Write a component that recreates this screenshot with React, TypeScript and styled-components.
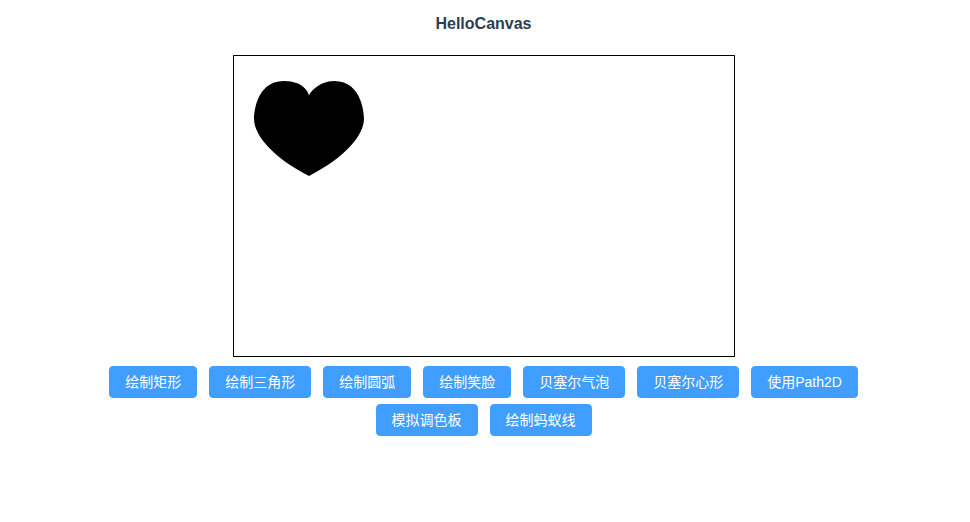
import React, { useEffect, useRef } from "react";
import styled, { createGlobalStyle } from "styled-components";

const Global = createGlobalStyle`
  html, body { margin: 0; padding: 0; background: #fff; }
  body { font-family: "Liberation Sans", Arial, "Noto Sans CJK SC", sans-serif; }
`;

const Page = styled.div`
  display: flex;
  flex-direction: column;
  align-items: center;
  padding-right: 3px;
`;

const Title = styled.h3`
  margin: 15px 0 0;
  font-size: 16px;
  line-height: 18px;
  font-weight: bold;
  color: #2c3e50;
`;

const Board = styled.canvas`
  display: block;
  margin-top: 22px;
  border: 1px solid #000;
`;

const Toolbar = styled.div`
  display: flex;
  flex-wrap: wrap;
  justify-content: center;
  column-gap: 12px;
  row-gap: 6px;
  max-width: 800px;
  margin-top: 9px;
`;

const Button = styled.button`
  height: 32px;
  padding: 0 15px;
  border: 1px solid #409eff;
  border-radius: 4px;
  background: #409eff;
  color: #fff;
  font-family: "Liberation Sans", Arial, "Noto Sans CJK SC", sans-serif;
  font-size: 14px;
  line-height: 1;
  cursor: pointer;
  white-space: nowrap;
`;

const labels = [
  "绘制矩形",
  "绘制三角形",
  "绘制圆弧",
  "绘制笑脸",
  "贝塞尔气泡",
  "贝塞尔心形",
  "使用Path2D",
  "模拟调色板",
  "绘制蚂蚁线",
];

export default function App() {
  const ref = useRef<HTMLCanvasElement>(null);

  useEffect(() => {
    const c = ref.current;
    if (!c) return;
    const ctx = c.getContext("2d");
    if (!ctx) return;
    ctx.clearRect(0, 0, c.width, c.height);
    ctx.beginPath();
    ctx.moveTo(75, 40);
    ctx.bezierCurveTo(75, 37, 70, 25, 50, 25);
    ctx.bezierCurveTo(20, 25, 20, 62.5, 20, 62.5);
    ctx.bezierCurveTo(20, 80, 40, 102, 75, 120);
    ctx.bezierCurveTo(110, 102, 130, 80, 130, 62.5);
    ctx.bezierCurveTo(130, 62.5, 130, 25, 100, 25);
    ctx.bezierCurveTo(85, 25, 75, 37, 75, 40);
    ctx.fillStyle = "#000";
    ctx.fill();
  }, []);

  return (
    <>
      <Global />
      <Page>
        <Title>HelloCanvas</Title>
        <Board ref={ref} width={500} height={300} />
        <Toolbar>
          {labels.map((l) => (
            <Button key={l}>{l}</Button>
          ))}
        </Toolbar>
      </Page>
    </>
  );
}
